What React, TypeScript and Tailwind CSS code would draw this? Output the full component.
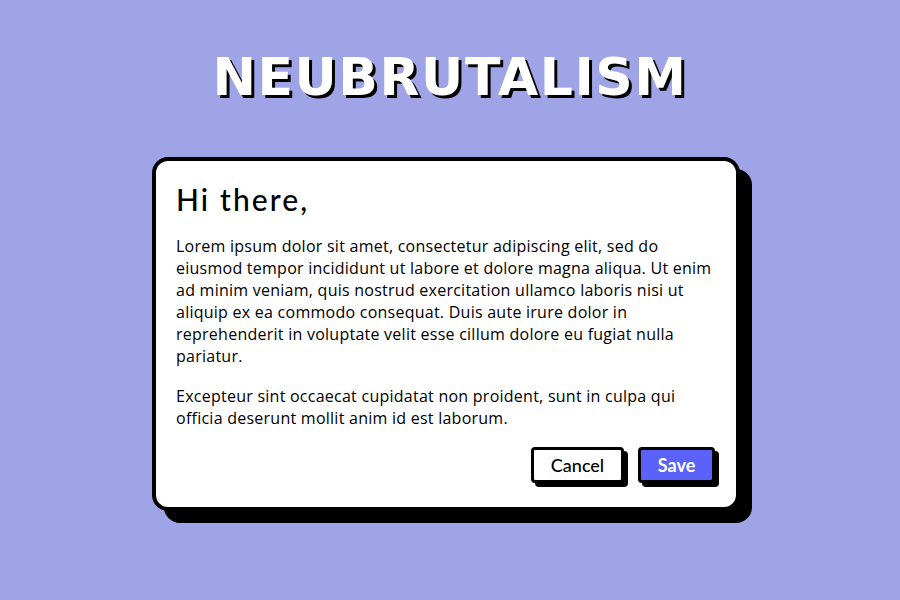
import React from "react";

export default function App() {
  return (
    <div className="w-[900px] h-[600px] bg-[#9ea4e6] flex flex-col items-center font-['Open_Sans',sans-serif]">
      <h1 className="mt-[47px] text-[52px] leading-[60px] font-bold tracking-[0.03em] text-white font-['DejaVu_Sans',sans-serif] [text-shadow:3px_3px_0_#000]">
        NEUBRUTALISM
      </h1>

      <div className="mt-[50px] mr-[8px] w-[588px] bg-white border-[4px] border-black rounded-[16px] shadow-[12px_12px_0_0_#000] px-[20px] pt-[18px] pb-[24px] text-black">
        <h2 className="text-[30px] leading-[40px] font-medium tracking-[0.07em] font-['Lato',sans-serif]">Hi there,</h2>
        <p className="mt-[16px] text-[16px] leading-[22px] tracking-[0.25px]">
          Lorem ipsum dolor sit amet, consectetur adipiscing elit, sed do eiusmod tempor incididunt ut
          labore et dolore magna aliqua. Ut enim ad minim veniam, quis nostrud exercitation ullamco
          laboris nisi ut aliquip ex ea commodo consequat. Duis aute irure dolor in reprehenderit in
          voluptate velit esse cillum dolore eu fugiat nulla pariatur.
        </p>
        <p className="mt-[18px] text-[16px] leading-[22px] tracking-[0.25px]">
          Excepteur sint occaecat cupidatat non proident, sunt in culpa qui officia deserunt mollit
          anim id est laborum.
        </p>
        <div className="mt-[18px] flex justify-end gap-[14px] pr-[1px]">
          <button className="w-[93px] h-[36px] bg-white border-[3px] border-black rounded-[4px] shadow-[4px_4px_0_0_#000] text-[18px] font-medium font-['Lato',sans-serif]">
            Cancel
          </button>
          <button className="w-[77px] h-[36px] bg-[#5a62fa] border-[3px] border-black rounded-[4px] shadow-[4px_4px_0_0_#000] text-[18px] font-bold text-white font-['Lato',sans-serif]">
            Save
          </button>
        </div>
      </div>
    </div>
  );
}
